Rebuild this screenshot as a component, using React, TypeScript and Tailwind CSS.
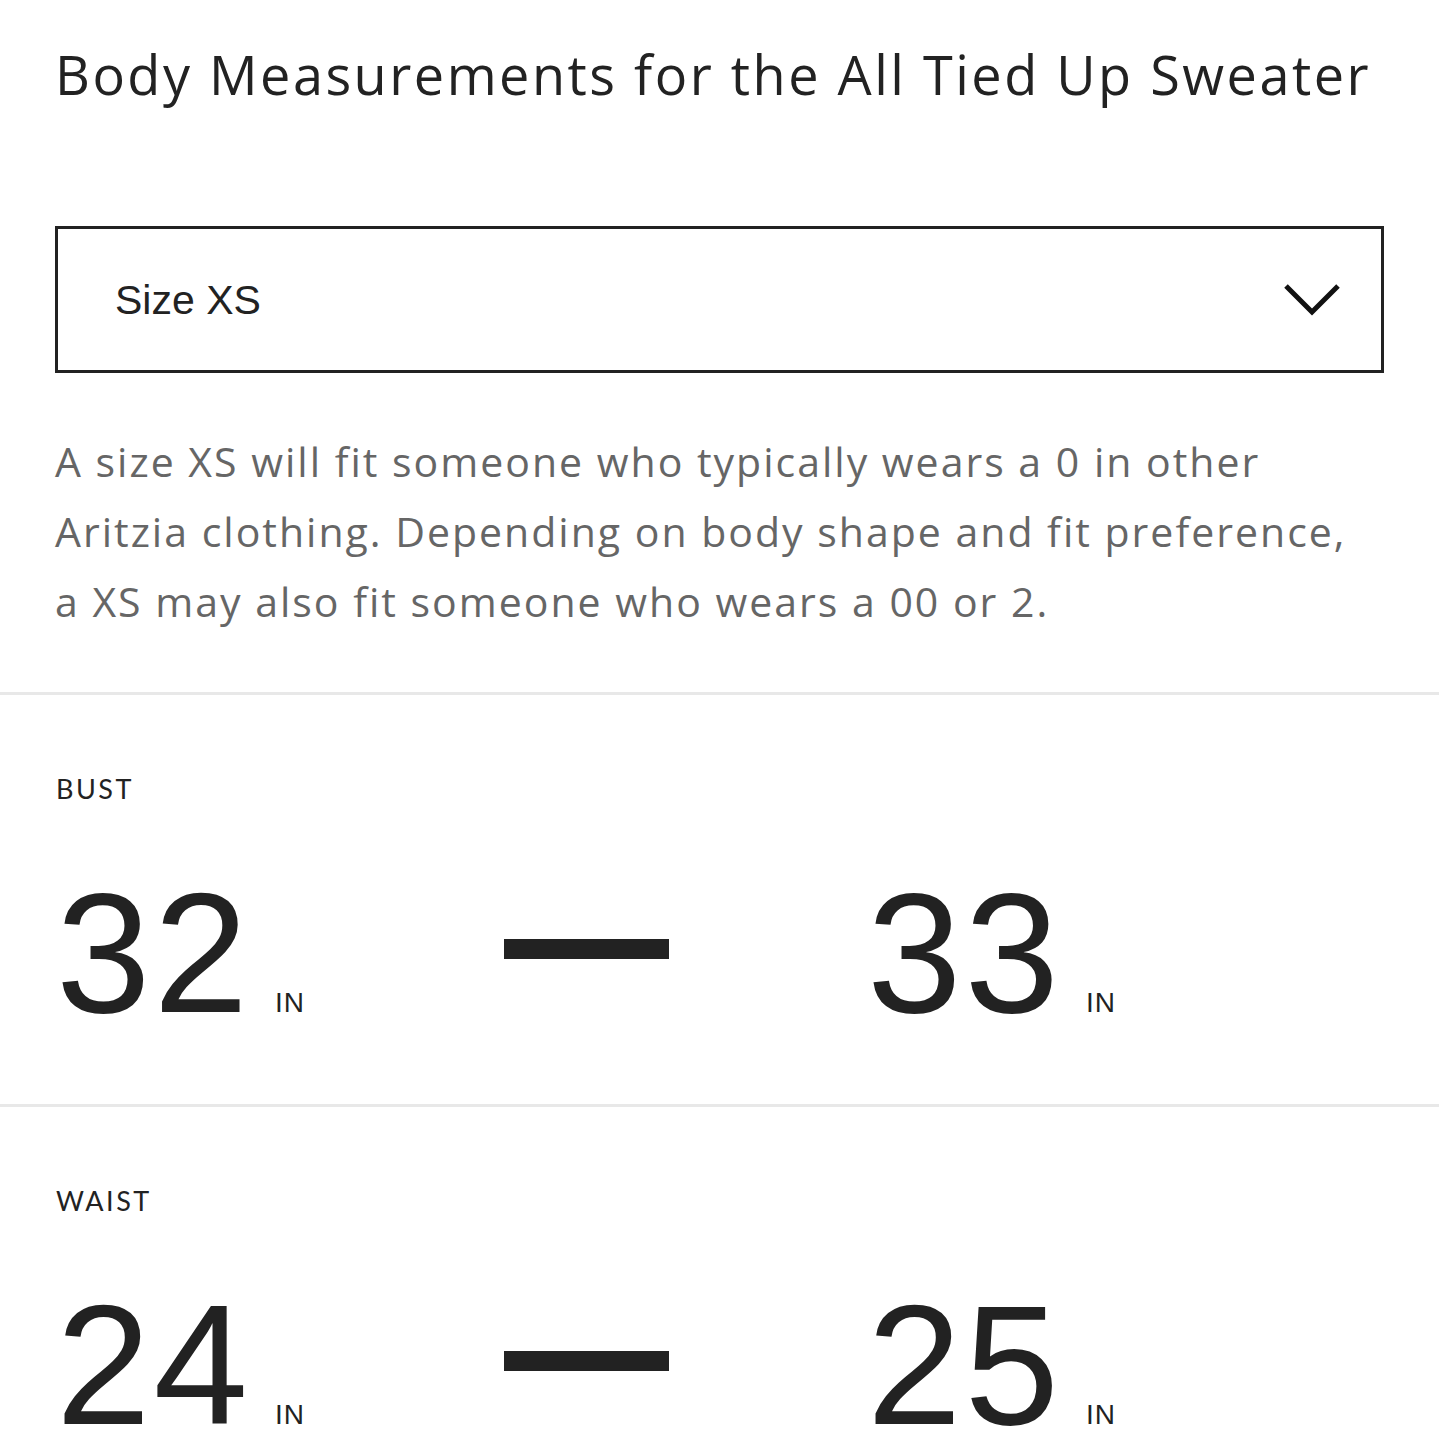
import React from 'react';

interface Measurement {
  label: string;
  min: number;
  max: number;
}

const measurements: Measurement[] = [
  { label: 'Bust', min: 32, max: 33 },
  { label: 'Waist', min: 24, max: 25 },
];

function Value({ value }: { value: number }) {
  return (
    <div className="flex items-baseline">
      <span className="font-['Liberation_Sans',Arial,sans-serif] text-[170px] leading-none tracking-[3px] text-[#222]">
        {value}
      </span>
      <span className="ml-[24px] font-['Liberation_Sans',Arial,sans-serif] text-[28px] leading-none tracking-[1px] text-[#222]">
        IN
      </span>
    </div>
  );
}

function MeasurementRow({ item }: { item: Measurement }) {
  return (
    <section className="border-t-[3px] border-[#e8e8e8] px-[56px] pt-[80px] pb-[66px]">
      <h3 className="font-['Lato',sans-serif] text-[27px] leading-none uppercase tracking-[2.5px] text-[#222]">
        {item.label}
      </h3>
      <div className="mt-[66px] flex w-[1060px] items-center justify-between">
        <Value value={item.min} />
        <div className="h-[20px] w-[165px] -translate-y-1 bg-[#222]" />
        <Value value={item.max} />
      </div>
    </section>
  );
}

export default function App() {
  return (
    <div className="min-h-screen bg-white">
      <div className="px-[55px] pt-[40px] pb-[56px]">
        <h1 className="font-['Open_Sans',sans-serif] text-[54px] leading-[68px] tracking-[2.5px] text-[#222]">
          Body Measurements for the All Tied Up Sweater
        </h1>

        <div className="mt-[118px] flex h-[147px] items-center justify-between border-[3px] border-[#222] pl-[57px] pr-[40px]">
          <span className="mt-[3px] font-['Liberation_Sans',Arial,sans-serif] text-[41px] text-[#222]">Size XS</span>
          <svg width="58" height="36" viewBox="0 0 58 36" fill="none" stroke="#111" strokeWidth="5">
            <path d="M3 4 L29 30 L55 4" />
          </svg>
        </div>

        <p className="mt-[53px] pr-[30px] font-['Open_Sans',sans-serif] text-[41px] leading-[70px] tracking-[2px] text-[#666]">
          A size XS will fit someone who typically wears a 0 in other Aritzia clothing. Depending on body shape and fit
          preference, a XS may also fit someone who wears a 00 or 2.
        </p>
      </div>

      {measurements.map((m) => (
        <MeasurementRow key={m.label} item={m} />
      ))}
    </div>
  );
}
